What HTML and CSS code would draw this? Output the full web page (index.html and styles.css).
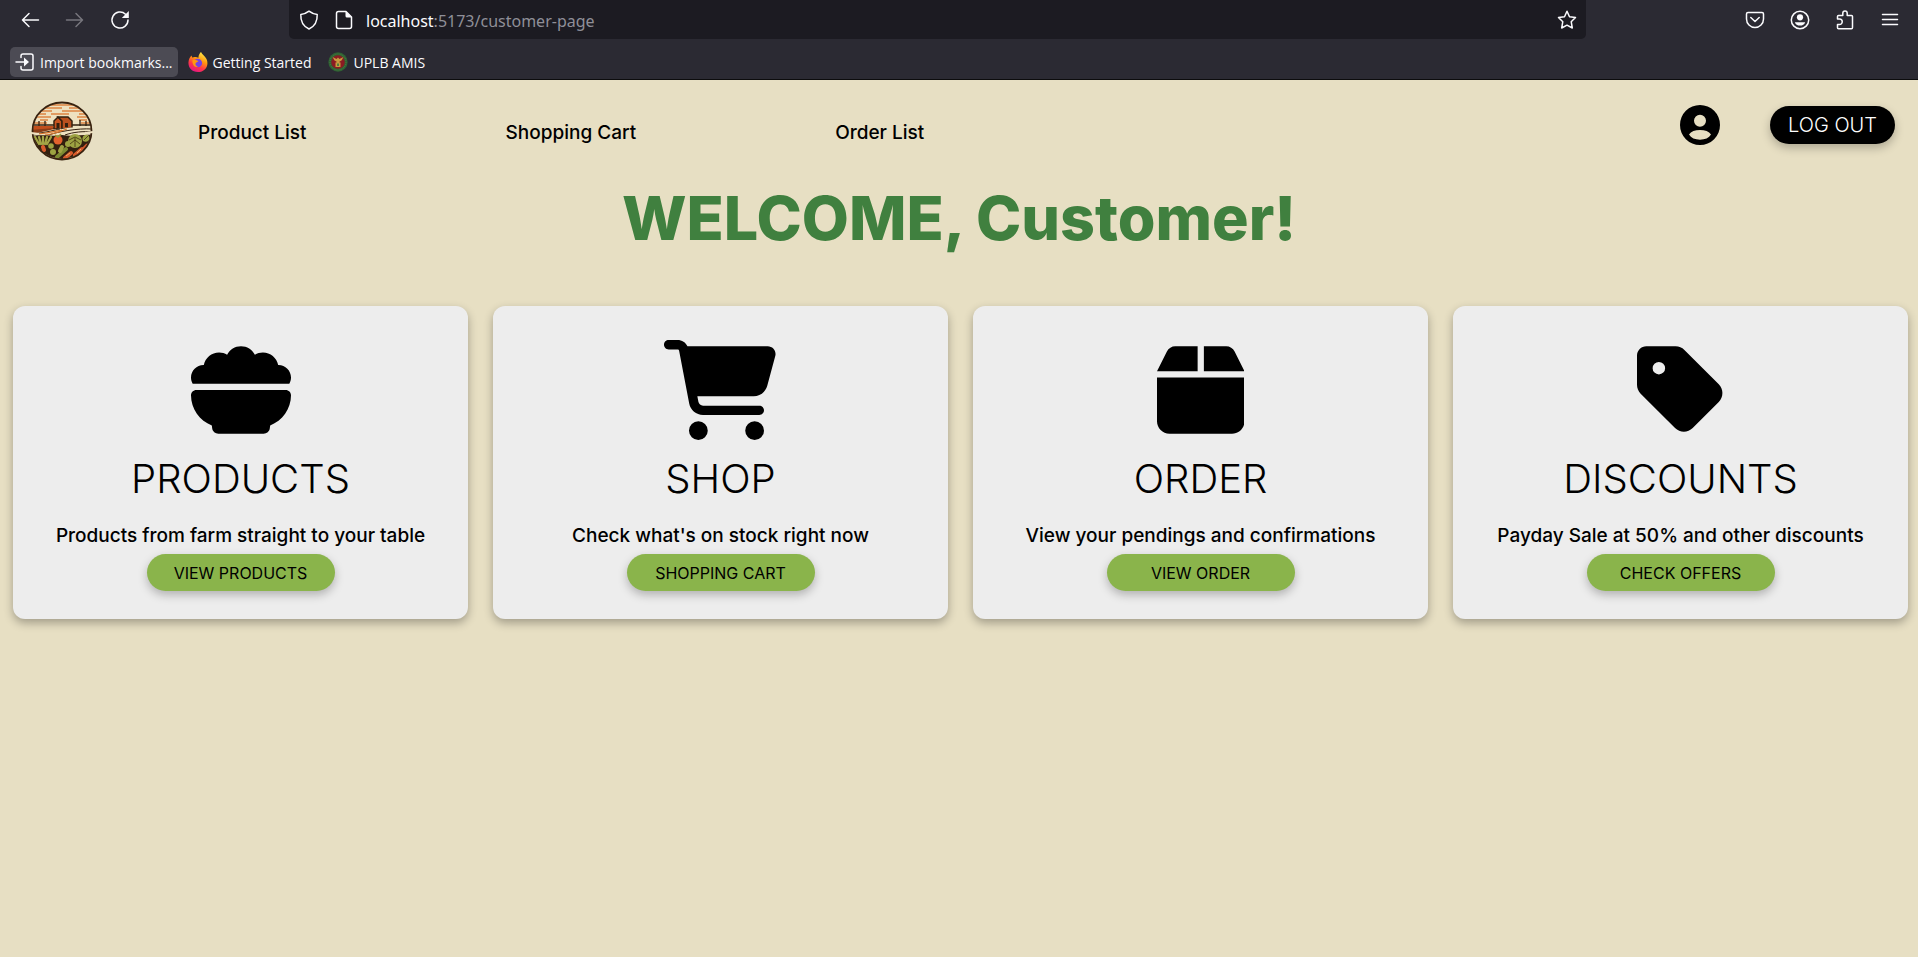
FILE: index.html
```
<!DOCTYPE html>
<html lang="en">
<head>
<meta charset="utf-8">
<meta name="viewport" content="width=device-width, initial-scale=1">
<title>Customer page</title>
<link rel="stylesheet" href="styles.css">
</head>
<body>
<div class="browser">
  <div class="toolbar">
    <div class="nav-buttons">
      <button class="tool" type="button" aria-label="Back"><svg viewBox="0 0 20 20"><path d="M18.500 10H2.500M9 3.500L2.500 10L9 16.500"/></svg></button>
      <button class="tool tool-off" type="button" aria-label="Forward" disabled><svg viewBox="0 0 20 20"><path d="M1.500 10H17.500M11 3.500L17.500 10L11 16.500"/></svg></button>
      <button class="tool" type="button" aria-label="Reload"><svg viewBox="0 0 20 20"><path d="M15.500 4.200A8 8 0 1 0 18 10"/><path class="solid" d="M18.800 1V8H11.800Z"/></svg></button>
    </div>
    <div class="address">
      <svg class="glyph" viewBox="0 0 20 20" aria-hidden="true"><path d="M10 1.200C7.500 3.200 4.700 4.200 1.800 4.400C1.500 11 4.500 16.500 10 19C15.500 16.500 18.500 11 18.200 4.400C15.300 4.200 12.500 3.200 10 1.200Z"/></svg>
      <svg class="glyph" viewBox="0 0 20 20" aria-hidden="true"><path d="M12 1.500H4.500Q2.500 1.500 2.500 3.500V16.500Q2.500 18.500 4.500 18.500H15.500Q17.500 18.500 17.500 16.500V7Z"/><path class="solid" d="M11.500 1L18 7.500H13Q11.500 7.500 11.500 6Z"/></svg>
      <div class="url" role="textbox" aria-label="Address" contenteditable="true" spellcheck="false"><span class="host">localhost</span>:5173/customer-page</div>
      <button class="tool" type="button" aria-label="Bookmark this page"><svg viewBox="0 0 20 20"><path d="M10 1.300L12.500 6.700L18.500 7.500L14.200 11.700L15.300 18L10 15.200L4.700 18L5.800 11.700L1.500 7.500L7.500 6.700Z"/></svg></button>
    </div>
    <div class="extras">
      <button class="tool" type="button" aria-label="Save to Pocket"><svg viewBox="0 0 20 20"><path d="M3 2.500H17Q18.500 2.500 18.500 4V9A8.500 8.500 0 0 1 1.500 9V4Q1.500 2.500 3 2.500ZM5.800 7.500L10 11.500L14.200 7.500"/></svg></button>
      <button class="tool" type="button" aria-label="Account"><svg viewBox="0 0 20 20"><circle cx="10" cy="10" r="8.700"/><circle class="solid" cx="10" cy="7.300" r="3.100"/><path class="solid" d="M4.800 12.200H15.200C14.500 14.500 12.500 15.600 10 15.600S5.500 14.500 4.800 12.200Z"/></svg></button>
      <button class="tool" type="button" aria-label="Extensions"><svg viewBox="0 0 20 20"><path d="M2.500 9V6.500Q2.500 5.500 3.500 5.500H7.800V3.200A2.200 2.200 0 0 1 12.200 3.200V5.500H16.500Q17.500 5.500 17.500 6.500V17.500Q17.500 18.800 16.500 18.800H3.500Q2.500 18.800 2.500 17.800V14.500H4.500A2.700 2.700 0 0 0 4.500 9Z"/></svg></button>
      <button class="tool" type="button" aria-label="Menu"><svg viewBox="0 0 20 20"><path d="M2.500 4.500H17.500M2.500 9.500H17.500M2.500 14.500H17.500"/></svg></button>
    </div>
  </div>
  <nav class="bookmarks" aria-label="Bookmarks">
    <button class="bookmark bookmark-active" type="button"><svg class="glyph" viewBox="0 0 20 20" aria-hidden="true"><path d="M6 5.500V4Q6 2 8 2H16Q18 2 18 4V16Q18 18 16 18H8Q6 18 6 16V14.500M1 10H10"/><path class="solid" d="M9 5.500L14 10L9 14.500Z"/></svg>Import bookmarks...</button>
    <a class="bookmark" href="#"><svg class="favicon" viewBox="0 0 20 20" aria-hidden="true">
      <defs><linearGradient id="fire" x1="0.800" y1="0" x2="0.300" y2="1"><stop offset="0" stop-color="#fff44f"/><stop offset="0.400" stop-color="#ff980e"/><stop offset="0.700" stop-color="#ff3647"/><stop offset="1" stop-color="#e31587"/></linearGradient></defs>
      <path fill="url(#fire)" d="M13 0C14 2.500 17 4 18.500 7C21.500 13.500 17 20 10 20C3.500 20 0 15 .500 10C.700 7 2 5 3.500 3.500L4.200 5.500L6.500 5C8 4.800 9 5.500 10.500 5.800C10.300 3.500 11.500 1.500 13 0Z"/>
      <circle cx="9.800" cy="11" r="4.300" fill="#7542e5"/><path fill="#ff980e" d="M4.500 8C7 7 9 8.500 10.500 9C9.500 10.500 8 10.300 7.500 11.500C7.200 12.500 7.800 14 10 14.500C7 16 4 13 4.500 8Z"/></svg>Getting Started</a>
    <a class="bookmark" href="#"><svg class="favicon" viewBox="0 0 20 20" aria-hidden="true"><circle cx="10" cy="10" r="9.700" fill="#2f6134"/><circle cx="10" cy="10" r="8" fill="none" stroke="#4d7e3c" stroke-dasharray="1 1"/><circle cx="10" cy="10" r="6.800" fill="#8b1b22"/><path fill="#c99a3f" d="M4.500 5L8.500 7L10 5.500L11.500 7L15.500 5L13.500 8.500L11.500 9.500V10.500H12.500V15H7.500V10.500H8.500V9.500L6.500 8.500Z"/><path fill="#4d7e3c" d="M9 11.500H11V14H9Z"/></svg>UPLB AMIS</a>
  </nav>
</div>

<header class="site-header">
  <a class="logo" href="#" aria-label="Home">
    <svg viewBox="0 0 62 60">
      <defs><clipPath id="badge"><ellipse cx="31" cy="30" rx="29" ry="28"/></clipPath></defs>
      <ellipse cx="31" cy="30" rx="30" ry="29" fill="#eee1c0"/>
      <g clip-path="url(#badge)">
        <g stroke="#dd8442" stroke-width="1.300" fill="none"><path d="M19 4H43M13 7H31M38 7H50M10 10H21M31 10H54M7 13H15M20 13H38M48 13H56M5 16H20M46 16H58M9 19H17M48 19H56M3 22H16M50 22H60"/></g>
        <path fill="#c24f1c" d="M0 25H22L24 29L0 33Z"/><path fill="#8a3d18" d="M0 29L24 27L10 33H0Z"/>
        <path stroke="#33200f" stroke-width="1.300" fill="none" d="M0 24H23M40 24H62M8 20V25M14 20V25M49 19V25M55 20V25"/>
        <path fill="#c65420" stroke="#33200f" stroke-width="1.500" d="M23 20L27 16L31 20V28H23Z"/><path fill="#b9501f" stroke="#33200f" stroke-width="1.500" d="M27 16H37L41 20V27L31 28V20Z"/><path fill="#33200f" d="M25.500 22H28.500V28H25.500ZM34 22H37V26H34Z"/>
        <path fill="#eee1c0" d="M0 33C15 31 23 27 31 28C43 25 53 27 62 28V36H0Z"/>
        <path stroke="#33200f" fill="none" d="M2 33C18 31 23 29 29 28M18 34C25 31 47 27 61 28M34 34C42 31 53 30 61 31"/><path stroke="#d8742c" stroke-width="1.200" fill="none" d="M7 33C19 32 25 30 31 29M14 34C24 33 30 30 36 28"/>
        <path fill="#33200f" d="M0 35C15 33 24 36 31 34C42 36 53 33 62 34V60H0Z"/>
        <g stroke="#a3a545" stroke-width="2.300" stroke-linecap="round"><path d="M4 36L8 43M8 36L10 43M12 36L12 43M16 36L14 43M20 36L16 43"/></g>
        <circle cx="27" cy="39" r="4.500" fill="#e2622d"/><path stroke="#929a38" stroke-width="1.500" fill="none" d="M24 34L27 36L30 33"/>
        <g fill="#9da342"><circle cx="44" cy="40" r="7"/><circle cx="20" cy="45" r="2.800"/><circle cx="22" cy="51" r="3"/><circle cx="37" cy="43" r="3"/><path d="M52 40C50 35 54 33 57 34C61 39 56 42 52 40Z"/></g>
        <path stroke="#42300f" stroke-width="0.800" fill="none" d="M38 39L44 36L50 39M39 43L44 39L49 43M44 37V46M53 39L57 35"/>
        <g stroke-linecap="round" stroke-width="4"><path stroke="#7c8b32" d="M35 48L26 56"/><path stroke="#a0a344" d="M31 46L29 50"/><path stroke="#d75b2c" d="M40 52L34 57M51 48L44 54M12 46L13 49"/></g>
        <path stroke="#d75b2c" stroke-width="3" stroke-linecap="round" d="M56 44L50 50"/><path stroke="#edac68" d="M39 52L35 55M50 48L46 52"/>
      </g>
      <ellipse cx="31" cy="30" rx="29.500" ry="28.500" fill="none" stroke="#38220f" stroke-width="1.800"/>
      <path d="M0 32L8 33M62 31L54 32" stroke="#eee1c0" stroke-width="2"/>
    </svg>
  </a>
  <nav class="links" aria-label="Main">
    <a href="#">Product List</a>
    <a href="#">Shopping Cart</a>
    <a href="#">Order List</a>
  </nav>
  <div class="account">
    <a class="profile" href="#" aria-label="Profile"><svg viewBox="2 2 20 20"><path fill-rule="evenodd" d="M12 2A10 10 0 1 0 12 22A10 10 0 1 0 12 2ZM12 6.900A3 3 0 1 1 12 12.900A3 3 0 1 1 12 6.900ZM6.500 16.800C7.500 15.200 9.500 14.500 12 14.500S16.500 15.200 17.500 16.800C16.500 18.500 14.500 19.400 12 19.400S7.500 18.500 6.500 16.800Z"/></svg></a>
    <button class="pill pill-dark" type="button">LOG OUT</button>
  </div>
</header>

<main>
  <h1 class="welcome">WELCOME, Customer!</h1>
  <div class="cards">
    <section class="card">
      <svg class="card-icon" viewBox="0 0 512 512" aria-hidden="true"><path d="M0 192c0-35.300 28.700-64 64-64c.5 0 1.100 0 1.600 0C73 91.500 105.300 64 144 64c15 0 29 4.100 40.900 11.200C198.200 49.600 225.100 32 256 32s57.800 17.600 71.100 43.200C339 68.100 353 64 368 64c38.700 0 71 27.500 78.400 64c.5 0 1.100 0 1.600 0c35.300 0 64 28.700 64 64c0 11.700-3.100 22.600-8.600 32H8.600C3.100 214.600 0 203.700 0 192zm0 91.400C0 268.300 12.300 256 27.400 256H484.600c15.100 0 27.400 12.300 27.400 27.400c0 70.500-44.400 130.700-106.700 154.100L403.500 452c-2 16-15.600 28-31.800 28H140.200c-16.100 0-29.800-12-31.800-28l-1.800-14.400C44.400 414.100 0 353.900 0 283.400z"/></svg>
      <h2>PRODUCTS</h2>
      <p>Products from farm straight to your table</p>
      <button class="pill pill-green" type="button">VIEW PRODUCTS</button>
    </section>
    <section class="card">
      <svg class="card-icon" viewBox="0 0 576 512" aria-hidden="true"><path d="M0 24C0 10.700 10.700 0 24 0H69.500c22 0 41.500 12.800 50.600 32h411c26.300 0 45.500 25 38.600 50.400l-41 152.300c-8.500 31.400-37 53.300-69.500 53.300H170.700l5.400 28.500c2.200 11.300 12.100 19.500 23.600 19.500H488c13.300 0 24 10.700 24 24s-10.700 24-24 24H199.700c-34.600 0-64.300-24.600-70.700-58.500L77.400 54.500c-.7-3.800-4-6.500-7.900-6.500H24C10.700 48 0 37.300 0 24zM128 464a48 48 0 1 1 96 0 48 48 0 1 1 -96 0zm336-48a48 48 0 1 1 0 96 48 48 0 1 1 0-96z"/></svg>
      <h2>SHOP</h2>
      <p>Check what's on stock right now</p>
      <button class="pill pill-green" type="button">SHOPPING CART</button>
    </section>
    <section class="card">
      <svg class="card-icon" viewBox="0 0 448 512" aria-hidden="true"><path d="M50.700 58.500L0 160H208V32H93.700C75.500 32 58.900 42.300 50.700 58.500zM240 160H448L397.300 58.500C389.100 42.300 372.500 32 354.300 32H240V160zm208 32H0V416c0 35.300 28.700 64 64 64H384c35.300 0 64-28.700 64-64V192z"/></svg>
      <h2>ORDER</h2>
      <p>View your pendings and confirmations</p>
      <button class="pill pill-green" type="button">VIEW ORDER</button>
    </section>
    <section class="card">
      <svg class="card-icon" viewBox="0 0 448 512" aria-hidden="true"><path d="M0 80V229.500c0 17 6.700 33.300 18.700 45.300l176 176c25 25 65.500 25 90.500 0L418.700 317.300c25-25 25-65.500 0-90.500l-176-176c-12-12-28.300-18.700-45.300-18.700H48C21.500 32 0 53.500 0 80zm112 32a32 32 0 1 1 0 64 32 32 0 1 1 0-64z"/></svg>
      <h2>DISCOUNTS</h2>
      <p>Payday Sale at 50% and other discounts</p>
      <button class="pill pill-green" type="button">CHECK OFFERS</button>
    </section>
  </div>
</main>
</body>
</html>
```
FILE: styles.css
```
* {
  box-sizing: border-box;
}

body {
  margin: 0;
  min-height: 100vh;
  background: #e7dfc3;
  color: #000;
  font-family: Inter, "Liberation Sans", sans-serif;
}

a {
  color: inherit;
  text-decoration: none;
}

button {
  border: 0;
  padding: 0;
  background: none;
  color: inherit;
  font: inherit;
}

svg {
  display: block;
}

/* Browser chrome */
.browser {
  background: #2b2a33;
  border-bottom: 1px solid #0c0c0d;
  color: #fbfbfe;
  font-family: "Open Sans", "Noto Sans", sans-serif;
}

.toolbar {
  display: flex;
  align-items: center;
  height: 39px;
}

.nav-buttons {
  display: flex;
  gap: 25px;
  padding-left: 20px;
  width: 289px;
}

.tool svg,
.glyph {
  width: 20px;
  height: 20px;
  fill: none;
  stroke: currentColor;
  stroke-width: 1.5;
  stroke-linecap: round;
  stroke-linejoin: round;
}

.tool .solid,
.glyph .solid {
  fill: currentColor;
  stroke: none;
}

.tool-off {
  color: #77767d;
}

.address {
  flex: 1;
  display: flex;
  align-items: center;
  gap: 15px;
  height: 39px;
  padding: 0 9px 0 10px;
  border-radius: 0 0 5px 5px;
  background: #1c1b22;
}

.url {
  flex: 1;
  margin-left: -3px;
  color: #8f8f98;
  font: 16px/24px "Noto Sans", sans-serif;
  padding-top: 3px;
  white-space: nowrap;
}

.host {
  color: #fbfbfe;
}

.extras {
  display: flex;
  gap: 25px;
  width: 332px;
  padding-right: 18px;
  justify-content: flex-end;
}

.bookmarks {
  display: flex;
  gap: 10px;
  padding: 8px 10px 2px;
}

.bookmark {
  display: flex;
  align-items: center;
  gap: 5px;
  height: 30px;
  padding-right: 7px;
  font-size: 14px;
  border-radius: 5px;
}

.bookmark-active {
  padding: 0 5px;
  background: #4c4b54;
}

.favicon {
  width: 20px;
  height: 20px;
}

/* Site header */
.site-header {
  display: flex;
  align-items: center;
  padding: 21px 23px 21px 31px;
}

.logo svg {
  width: 62px;
  height: 60px;
}

.links {
  display: flex;
  gap: 199px;
  margin-left: 105px;
  padding-top: 2px;
  font-size: 19px;
  font-weight: 500;
}

.account {
  display: flex;
  align-items: center;
  gap: 50px;
  margin-left: auto;
  margin-bottom: 12px;
}

.profile svg {
  width: 40px;
  height: 40px;
}

.pill {
  border-radius: 19px;
  box-shadow: 0 4px 10px rgba(0, 0, 0, 0.25);
}

.pill-dark {
  width: 125px;
  height: 38px;
  background: #000;
  color: #fff;
  font-size: 20px;
  font-weight: 300;
}

.pill-green {
  width: 188px;
  height: 37px;
  background: #8ab44b;
  font-size: 16px;
  font-weight: 400;
}

/* Main content */
.welcome {
  margin: 0;
  color: #40803f;
  font-size: 61px;
  font-weight: 800;
  line-height: 72px;
  text-align: center;
}

.cards {
  display: grid;
  grid-template-columns: repeat(4, 1fr);
  gap: 25px;
  margin-top: 52px;
  padding: 0 10px 40px 13px;
}

.card {
  display: flex;
  flex-direction: column;
  align-items: center;
  padding: 34px 8px 28px;
  border-radius: 12px;
  background: #ededed;
  box-shadow: 0 4px 10px rgba(0, 0, 0, 0.3);
}

.card-icon {
  height: 100px;
}

.card h2 {
  margin: 15px 0 21px;
  font-size: 40px;
  font-weight: 300;
  line-height: 48px;
}

.card p {
  margin: 0 0 6px;
  font-size: 19px;
  font-weight: 500;
  line-height: 24px;
  text-align: center;
}
```
